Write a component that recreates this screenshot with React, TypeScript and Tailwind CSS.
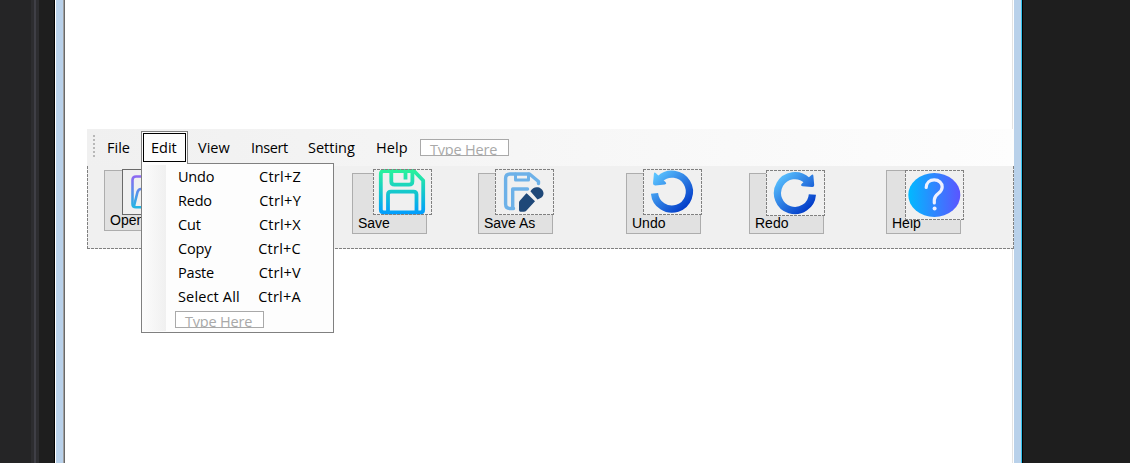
import React from 'react';

const menuFont = "font-['Open_Sans','Noto_Sans',sans-serif] text-[14.5px] whitespace-pre";

function Dashes({ top = true }: { top?: boolean }) {
  const h = 'absolute left-0 right-0 h-px bg-[repeating-linear-gradient(90deg,#808080_0_3px,transparent_3px_4px)]';
  const v = 'absolute top-0 bottom-0 w-px bg-[repeating-linear-gradient(180deg,#808080_0_3px,transparent_3px_4px)]';
  return (
    <>
      {top && <span className={`${h} top-0`} />}
      <span className={`${h} bottom-0`} />
      <span className={`${v} left-0`} />
      <span className={`${v} right-0`} />
    </>
  );
}

function OpenIcon() {
  return (
    <svg width="59" height="46" viewBox="0 0 59 46" fill="none" stroke="url(#open)" strokeWidth="2.6">
      <defs>
        <linearGradient id="open" x1="0" y1="6" x2="0" y2="40" gradientUnits="userSpaceOnUse">
          <stop stopColor="#9166f2" /><stop offset="1" stopColor="#1fb9e3" />
        </linearGradient>
      </defs>
      <path d="M48 7.5H14Q10.5 7.5 10.5 11V35Q10.5 38.300 14 38.300H48" />
      <path d="M12 37L15.500 23Q16.500 20 19 20H48" />
    </svg>
  );
}

function SaveIcon() {
  return (
    <svg width="59" height="46" viewBox="0 0 59 46" fill="none" stroke="url(#save)" strokeWidth="3.8" strokeLinejoin="round">
      <defs>
        <linearGradient id="save" x1="0" y1="0" x2="0" y2="45" gradientUnits="userSpaceOnUse">
          <stop stopColor="#2bf598" /><stop offset="1" stopColor="#009dff" />
        </linearGradient>
      </defs>
      <path d="M10.500 2H41L50.200 11.500V40.500Q50.200 43.500 47.500 43.500H11Q7.800 43.500 7.800 40.500V5Q7.800 2 10.500 2Z" />
      <path d="M18.300 2V12.500Q18.300 15.600 21.500 15.600H36Q39.400 15.600 39.400 12.500V2M32.500 2V10.500" />
      <path d="M15 43V25.500Q15 22.600 18 22.600H40.500Q43.500 22.600 43.500 25.500V43" />
    </svg>
  );
}

function SaveAsIcon() {
  return (
    <svg width="59" height="46" viewBox="0 0 59 46" fill="none">
      <g stroke="#6db1e8" strokeWidth="3.400" strokeLinejoin="round" strokeLinecap="round">
        <path d="M18.500 39.500H15Q10.600 39.500 10.600 35V9.500Q10.600 5 15 5H34.500L43.500 12.500V14.500" />
        <path d="M20.500 5V11H33.500V5" strokeWidth="3" />
        <path d="M17.700 39V20H32.500" />
      </g>
      <path d="M31.400 24.300Q32.500 25 33.500 26L40 32.200L31.500 41.500Q30.500 42.700 28.500 42.700H25.500Q24 42.700 24 41V33.500Q24 32.500 25 31.500Z" fill="#1f4878" />
      <path d="M35.400 22.200C37.500 19 40 17.700 43 18.300C46.500 19 48.800 22 48.500 25C48.200 27.800 45.500 29.500 42.500 30.500Z" fill="#1f4878" />
    </svg>
  );
}

function TurnIcon({ redo = false }: { redo?: boolean }) {
  const id = redo ? 'redo' : 'undo';
  return (
    <svg width="59" height="46" viewBox="0 0 59 46" fill="none">
      <defs>
        <linearGradient id={id} x1="12" y1="6" x2="43" y2="40" gradientUnits="userSpaceOnUse">
          <stop stopColor="#5bc4ff" /><stop offset="1" stopColor="#0038c7" />
        </linearGradient>
      </defs>
      {redo ? (
        <>
          <path d="M46.400 24.400A17.500 17.500 0 1 1 41 10.400" stroke={`url(#${id})`} strokeWidth="7.2" />
          <path d="M45.200 5.300Q47.200 3.600 47.400 6L48.200 15Q48.300 17.300 46 17.100L36.500 16.200Q33.800 15.600 36 13.500Z" fill={`url(#${id})`} />
        </>
      ) : (
        <>
          <path d="M11.500 24.300A17.500 17.500 0 1 0 16.800 10" stroke={`url(#${id})`} strokeWidth="7.2" />
          <path d="M12.900 4.200Q11.200 2.700 10.900 5.100L10 14.300Q9.900 16.500 12.300 16.400L21.800 15.400Q24.400 14.800 22.200 12.700Z" fill={`url(#${id})`} />
        </>
      )}
    </svg>
  );
}

function HelpIcon() {
  return (
    <svg width="59" height="50" viewBox="0 0 59 50" fill="none">
      <defs>
        <linearGradient id="help" x1="3" y1="0" x2="55" y2="0" gradientUnits="userSpaceOnUse">
          <stop stopColor="#00baff" /><stop offset="1" stopColor="#5b55ff" />
        </linearGradient>
      </defs>
      <ellipse cx="29.300" cy="25" rx="26" ry="22" fill="url(#help)" />
      <path d="M21.200 17.500C21.300 12.500 24.800 9.900 29.200 9.900C34 9.900 37.200 13 37.200 17C37.200 24 29.300 23 29.300 30V33" stroke="#edf1ff" strokeWidth="3.200" strokeLinecap="round" />
      <circle cx="29.600" cy="38.500" r="2" fill="#edf1ff" />
    </svg>
  );
}

const tools = [
  { label: 'Open', place: 'ml-[17px] mt-1 h-[61px]', pic: 'left-[17px] -top-[2px]', tall: false, solid: true, icon: <OpenIcon /> },
  { label: 'Save', place: 'ml-[173px] mt-[7px] h-[61px]', pic: 'left-[20px] top-[-5px]', tall: false, solid: false, icon: <SaveIcon /> },
  { label: 'Save As', place: 'ml-[51px] mt-[7px] h-[61px]', pic: 'left-[16px] top-[-5px]', tall: false, solid: false, icon: <SaveAsIcon /> },
  { label: 'Undo', place: 'ml-[73px] mt-[7px] h-[61px]', pic: 'left-[16px] top-[-5px]', tall: false, solid: false, icon: <TurnIcon /> },
  { label: 'Redo', place: 'ml-[48px] mt-[7px] h-[61px]', pic: 'left-[16px] top-[-4px]', tall: false, solid: false, icon: <TurnIcon redo /> },
  { label: 'Help', place: 'ml-[62px] mt-1 h-[64px]', pic: 'left-[18px] -top-px', tall: true, solid: false, icon: <HelpIcon /> },
];

const menus = [
  { name: 'View', cls: 'w-[53px]' },
  { name: 'Insert', cls: 'w-[57px] tracking-[-0.4px]' },
  { name: 'Setting', cls: 'w-[68px]' },
  { name: 'Help', cls: 'w-[44px] tracking-[0.1px]' },
];

const commands = [
  ['Undo', 'Ctrl+Z'],
  ['Redo', 'Ctrl+Y'],
  ['Cut', 'Ctrl+X'],
  ['Copy', 'Ctrl+C'],
  ['Paste', 'Ctrl+V'],
  ['Select All', 'Ctrl+A'],
];

function TypeHere() {
  return (
    <div className={`${menuFont} h-[17px] w-[89px] shrink-0 overflow-hidden border border-[#a9a9a9] bg-white pl-[9px] leading-5 tracking-[-0.2px] text-[#a9a9a9]`}>
      Type Here
    </div>
  );
}

function EditMenu() {
  return (
    <div className="absolute left-[54px] top-[34px] z-20 flex h-[170px] w-[193px] border border-[#808080] bg-[#fdfdfd] pt-px pb-px">
      <div className="w-6 shrink-0 bg-linear-to-r from-[#fcfcfc] to-[#f0f0f0]" />
      <div className="flex flex-1 flex-col">
        {commands.map(([name, key]) => (
          <div key={name} className={`${menuFont} flex h-6 items-start justify-between pt-[2px] pr-8 pl-3 leading-5`}>
            <span className={name === 'Select All' ? 'tracking-[0.15px]' : 'tracking-[-0.2px]'}>{name}</span>
            <span className="tracking-[0.25px]">{key}</span>
          </div>
        ))}
        <div className="mt-[2px] ml-[9px]"><TypeHere /></div>
      </div>
    </div>
  );
}

function MenuBar() {
  return (
    <div className={`${menuFont} relative flex h-[37px] bg-linear-to-r from-[#f0f0f0] to-[#fdfdfd] leading-5`}>
      <div className="mt-[6px] ml-[6px] h-[23px] w-[2px] bg-[repeating-linear-gradient(180deg,#b8b8b8_0_2px,transparent_2px_4px)]" />
      <div className="ml-[12px] w-[34px] pt-[9px]">File</div>
      <div className="relative z-30 mt-[2px] h-[33px] w-[47px] border border-b-0 border-[#808080] bg-[#fdfdfd] p-px">
        <div className="h-[29px] w-[43px] border border-black pt-[4px] pl-[7px]">Edit</div>
      </div>
      <div className="ml-[10px] flex pt-[9px]">
        {menus.map((m) => <div key={m.name} className={m.cls}>{m.name}</div>)}
      </div>
      <div className="pt-[10px]"><TypeHere /></div>
      <EditMenu />
    </div>
  );
}

export default function App() {
  return (
    <div className="flex h-[463px] w-[1130px] overflow-hidden bg-[#1e1e1e] text-black">
      <div className="w-[31px] shrink-0 bg-[#252526]" />
      <div className="w-[3px] shrink-0 bg-[#2d2d30]" />
      <div className="w-[2px] shrink-0 bg-[#3f3f46]" />
      <div className="w-[3px] shrink-0 bg-[#2d2d30]" />
      <div className="w-[15px] shrink-0 bg-[#1e1e1e]" />
      <div className="w-px shrink-0 bg-black" />
      <div className="w-px shrink-0 bg-white" />
      <div className="w-[7px] shrink-0 bg-[#b9d1ea]" />
      <div className="w-px shrink-0 bg-[#a0a0a0]" />
      <div className="w-px shrink-0 bg-[#696969]" />
      <div className="flex w-[949px] shrink-0 flex-col bg-white">
        <div className="flex h-[129px] shrink-0 justify-end pr-px"><div className="w-px bg-[#e3e3e3]" /></div>
        <div className="ml-[22px] w-[927px]">
          <MenuBar />
          <div className="relative flex h-[83px] bg-[#f0f0f0]">
            <Dashes top={false} />
            {tools.map((t) => (
              <div key={t.label} className={`relative flex w-[75px] shrink-0 items-end border border-[#adadad] bg-[#e1e1e1] pb-px pl-[5px] ${t.place}`}>
                <span className="font-['Liberation_Sans',Arial,sans-serif] text-[14px] leading-[17px] whitespace-pre">{t.label}</span>
                <div className={`absolute w-[59px] bg-[#f0f0f0] ${t.tall ? 'h-[50px]' : 'h-[46px]'} ${t.pic}`}>
                  {t.icon}
                  {t.solid ? <span className="absolute inset-0 border border-[#696969]" /> : <Dashes />}
                </div>
              </div>
            ))}
          </div>
        </div>
        <div className="flex flex-1 justify-end pr-px"><div className="w-px bg-[#e3e3e3]" /></div>
      </div>
      <div className="w-[7px] shrink-0 bg-[#b9d1ea]" />
      <div className="w-px shrink-0 bg-[#34c4ee]" />
      <div className="w-px shrink-0 bg-black" />
    </div>
  );
}
